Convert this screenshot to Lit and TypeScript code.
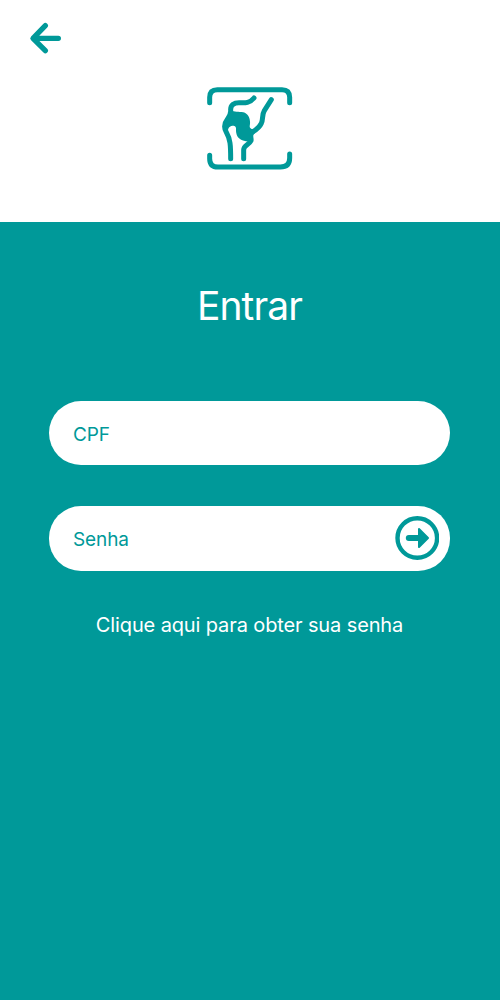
import { LitElement, html, css } from "lit";
import { customElement } from "lit/decorators.js";

@customElement("app-root")
class AppRoot extends LitElement {
  static styles = css`
    :host {
      display: flex;
      flex-direction: column;
      height: 1000px;
      background: #009999;
      font-family: Inter, "Liberation Sans", sans-serif;
      font-weight: 400;
      color: #fff;
    }
    * { box-sizing: border-box; }
    svg { display: block; }
    button {
      border: 0;
      padding: 0;
      background: none;
      color: #009999;
    }
    header {
      height: 221.5px;
      display: grid;
      grid-template-rows: 80px 100px;
      background: #fff;
      color: #009999;
    }
    .back { justify-self: start; align-self: start; margin: 15px 0 0 20px; }
    .logo { justify-self: center; }
    main {
      display: flex;
      flex-direction: column;
      align-items: center;
      padding: 60.5px 1px 0 0;
    }
    h1 {
      margin: 0;
      height: 48px;
      line-height: 48px;
      font-size: 39px;
      font-weight: 400;
      letter-spacing: -0.9px;
    }
    .field {
      width: 401px;
      height: 64px;
      border-radius: 32px;
      background: #fff;
      color: #009999;
      display: flex;
      align-items: center;
      justify-content: space-between;
      padding: 2px 11px 0 24px;
      font-size: 19px;
      letter-spacing: -0.1px;
    }
    .cpf { margin-top: 71px; }
    .senha { margin-top: 41px; height: 65px; padding: 0 11px 1px 24px; }
    .senha span { padding-top: 2px; }
    .hint { margin-top: 42px; line-height: 24px; font-size: 20px; font-weight: 400; letter-spacing: -0.12px; }
  `;

  render() {
    return html`
      <header>
        <button class="back" aria-label="Voltar">
          <svg width="50" height="50" viewBox="0 0 150 150" fill="none" stroke="currentColor"
            stroke-width="16" stroke-linecap="round" stroke-linejoin="round">
            <path d="M76 32 39 70 76 107M42 70H115" />
          </svg>
        </button>
        <svg class="logo" width="100" height="100" viewBox="0 0 300 300" fill="none" stroke="currentColor"
          stroke-width="15" stroke-linecap="round" stroke-linejoin="round">
          <path d="M29 68V52Q29 29 52 29H246Q269 29 269 52V68" />
          <path d="M29 226V236Q29 261 54 261H241Q269 261 269 234V222" />
          <path d="M162 54C150 69 136 69 120 68C101 67 91 76 92 91C93 103 89 108 82 118C72 131 71 143 79 157C91 178 92 195 92 236" />
          <path d="M214 59L193 92C185 105 190 119 184 130C177 145 164 152 154 158C145 166 156 173 153 182C148 193 131 196 131 209V236" />
          <path fill="currentColor" stroke="none" d="M92 88C103 99 116 94 130 97C147 102 153 119 149 139C149 148 160 150 170 144L160 166C160 181 151 188 138 184C122 181 111 173 109 160C106 148 112 140 101 137C90 137 83 143 84 155L74 141L79 119Z" />
        </svg>
      </header>
      <main>
        <h1>Entrar</h1>
        <div class="field cpf"><span>CPF</span></div>
        <div class="field senha">
          <span>Senha</span>
          <button aria-label="Entrar">
            <svg width="44" height="44" viewBox="0 0 44 44">
              <circle cx="22.3" cy="22" r="19.8" fill="none" stroke="currentColor" stroke-width="4.4" />
              <path d="M13.8 22H28" stroke="currentColor" stroke-width="6" stroke-linecap="round" />
              <path d="M24 13 33 22 24 31Z" fill="currentColor" stroke="currentColor" stroke-width="2" stroke-linejoin="round" />
            </svg>
          </button>
        </div>
        <div class="hint">Clique aqui para obter sua senha</div>
      </main>
    `;
  }
}
